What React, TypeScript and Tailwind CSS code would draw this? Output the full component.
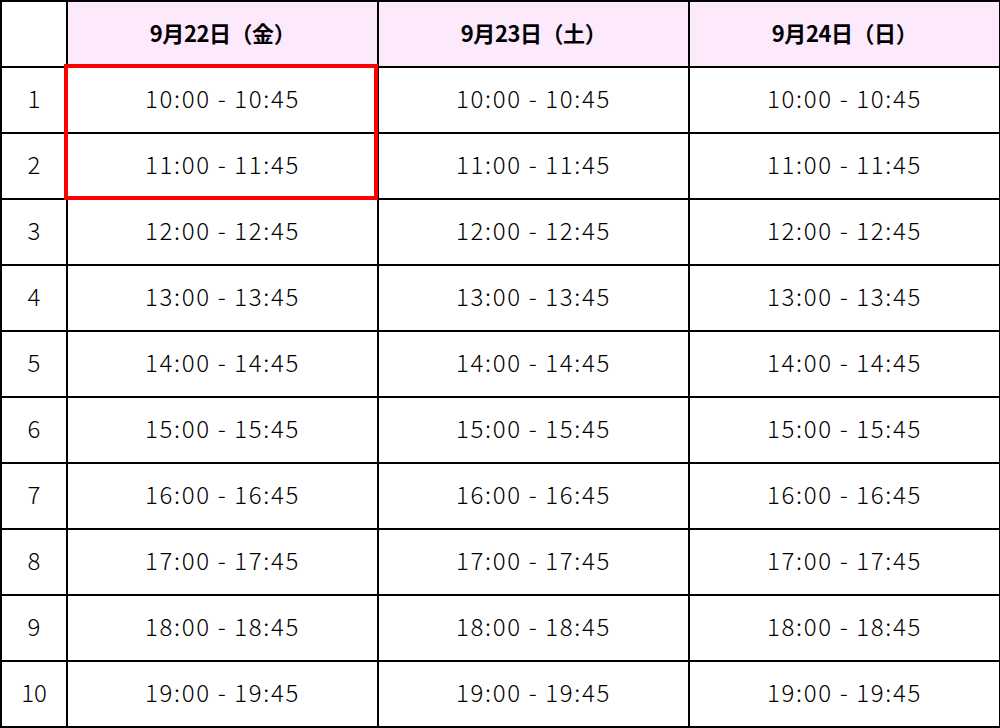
import React from 'react';

const days = ['9月22日（金）', '9月23日（土）', '9月24日（日）'];

const slots = [
  '10:00 - 10:45',
  '11:00 - 11:45',
  '12:00 - 12:45',
  '13:00 - 13:45',
  '14:00 - 14:45',
  '15:00 - 15:45',
  '16:00 - 16:45',
  '17:00 - 17:45',
  '18:00 - 18:45',
  '19:00 - 19:45',
];

export default function App() {
  return (
    <main
      className="w-[1000px] h-[728px] bg-white text-black relative"
      style={{ fontFamily: '"Noto Sans CJK JP", "Noto Sans", sans-serif' }}
    >
      <table className="w-[999px] border-collapse table-fixed">
        <colgroup>
          <col className="w-[66px]" />
          <col className="w-[311px]" />
          <col className="w-[311px]" />
          <col className="w-[311px]" />
        </colgroup>
        <thead>
          <tr className="h-[66px]">
            <th className="border-2 border-black bg-white"></th>
            {days.map((d) => (
              <th key={d} className="border-2 border-black bg-[#fde9fc] text-[22px] font-bold text-center pb-[3px] tracking-[-0.02em]">
                {d}
              </th>
            ))}
          </tr>
        </thead>
        <tbody>
          {slots.map((s, i) => (
            <tr key={s} className="h-[66px]">
              <td className="border-2 border-black text-center text-[24px] font-light pb-[4px]">{i + 1}</td>
              {days.map((d) => (
                <td key={d} className="border-2 border-black text-center text-[24px] font-light tracking-[0.07em] pb-[4px]">
                  {s}
                </td>
              ))}
            </tr>
          ))}
        </tbody>
      </table>
      {/* selected slots highlight */}
      <div className="absolute left-[64px] top-[64px] w-[314px] h-[136px] border-[4px] border-[#ff0000] pointer-events-none"></div>
    </main>
  );
}
